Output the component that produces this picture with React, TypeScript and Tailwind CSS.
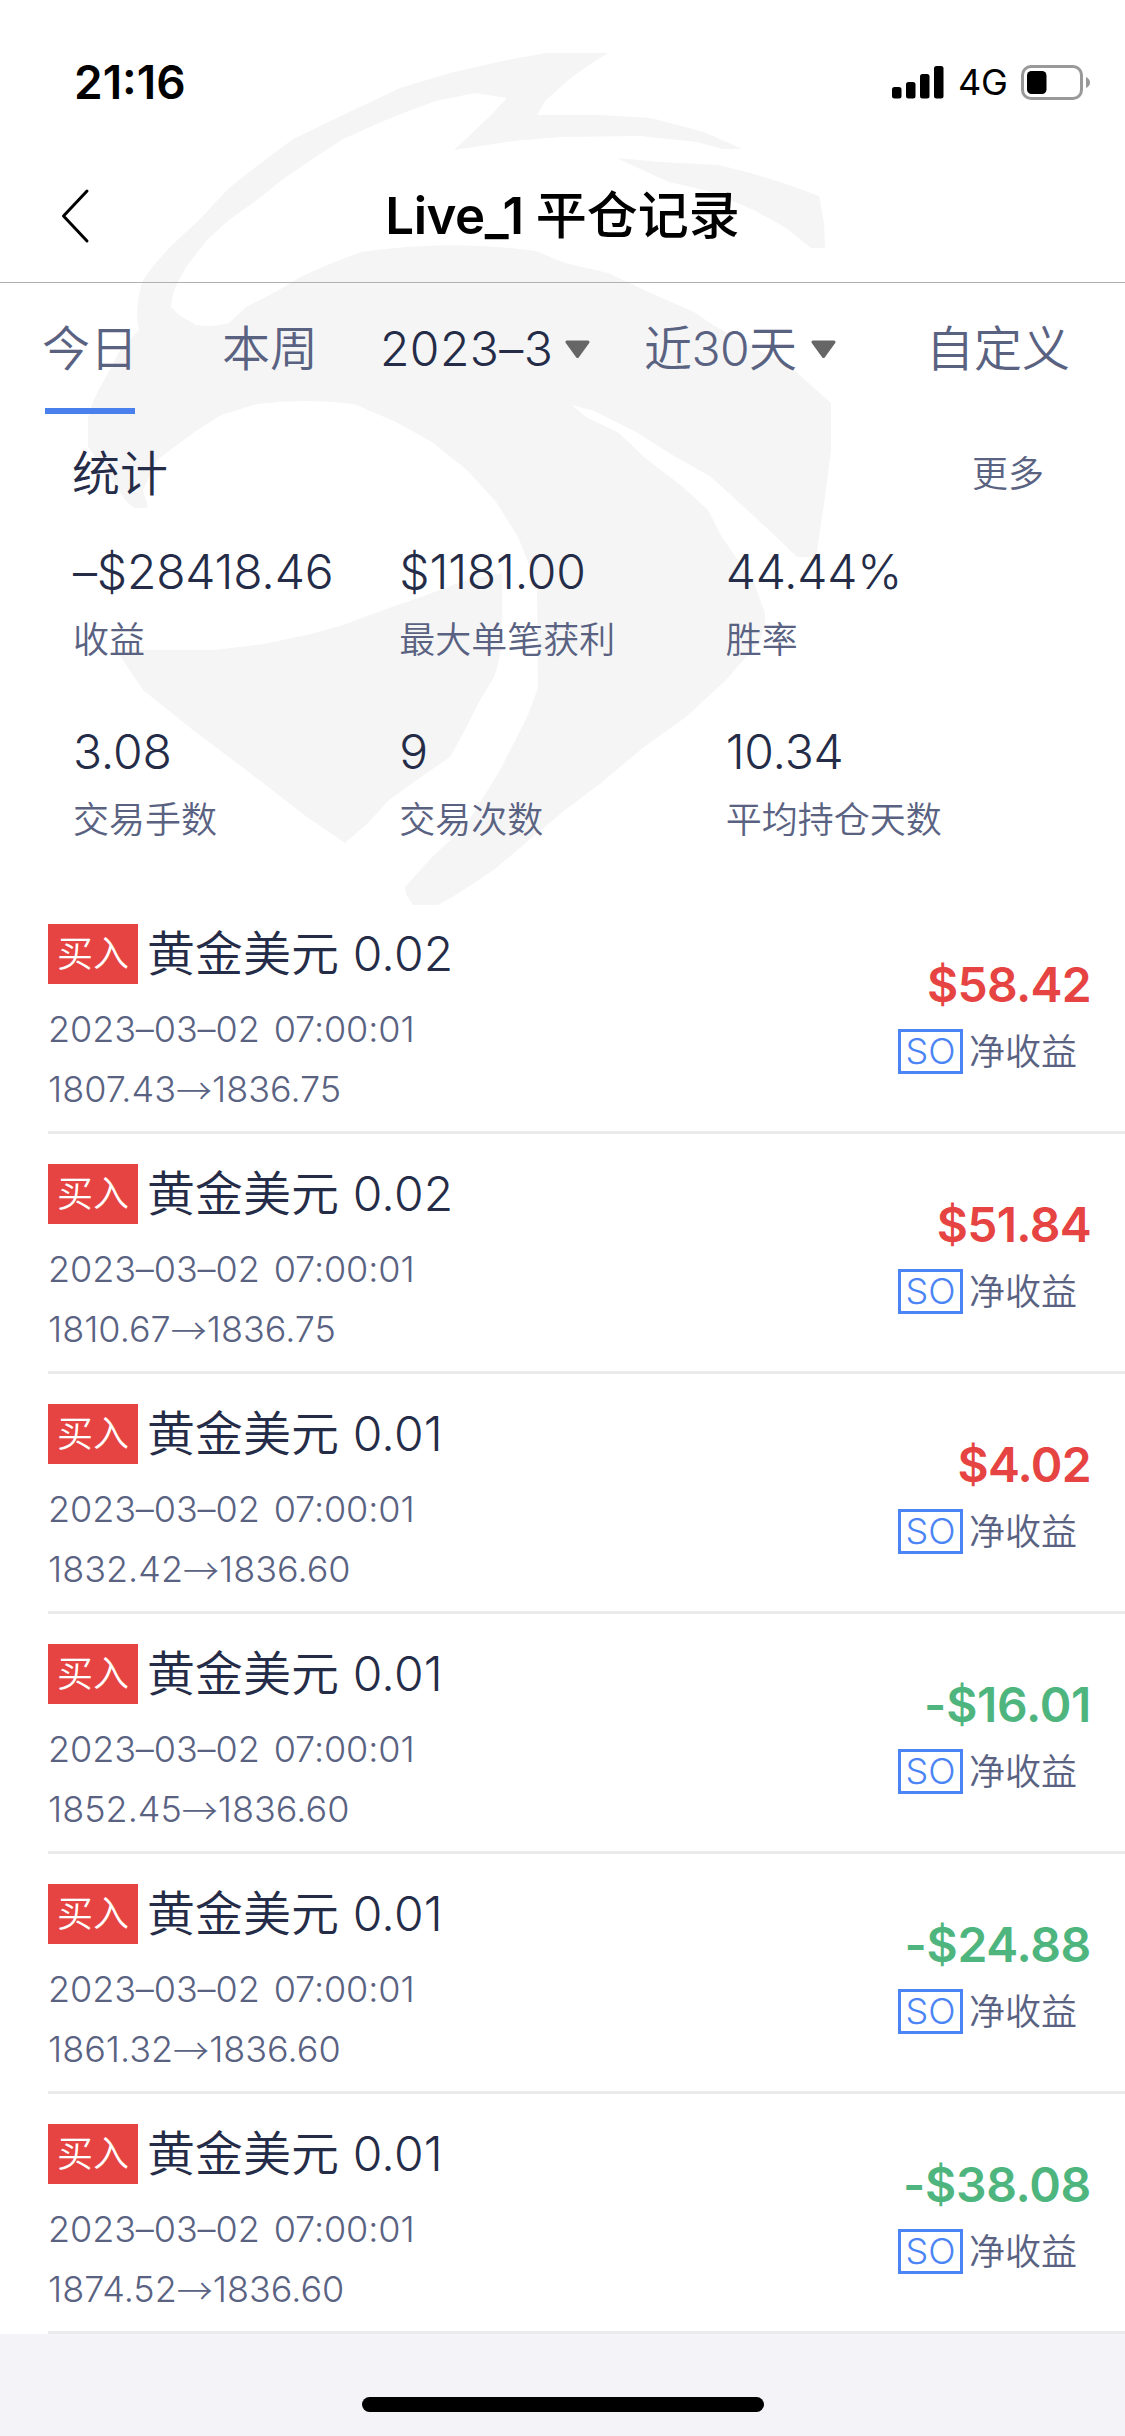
const FONT = "font-['Inter','Noto_Sans_CJK_SC',sans-serif]";

function Watermark() {
  return (
    <svg className="pointer-events-none absolute left-0 top-0" width="1125" height="940" viewBox="0 0 1125 940" fill="#f5f5f5" aria-hidden="true">
      <path d="M608 53 L546 53 L507 60 L450 73 L400 88 L343 115 L293 139 L257 166 L229 188 L200 219 L171 246 L154 265 L143 280 Q137 295 137 320 L139 330 L120 350 L107 375 Q97 392 93 402 L88 418 L88 447 L112 480 L125 500 L134 508 L148 508 L143 490 L157 460 L193 433 L221 415 L257 404 Q305 398 354 404 L396 422 L432 442 L468 471 L496 502 L518 537 Q530 565 537 590 L538 687 Q534 700 527 717 L514 743 L500 770 L486 793 L471 817 L454 837 L432 857 L405 887 L406 894 L413 905 L438 905 L459 893 L495 869 L565 810 L601 783 L644 747 L686 717 L726 680 L758 643 Q766 630 765 613 L754 583 L733 553 L722 537 L708 510 L683 487 L644 457 L619 433 L586 417 L572 405 L594 411 L636 432 L669 453 L711 477 L733 497 L769 530 L797 557 L816 557 L819 537 L826 490 L831 450 L831 403 L794 370 L713 325 L694 312 L644 290 L608 273 L565 263 L536 251 Q450 239 361 252 L332 263 L300 277 L279 290 L246 307 L229 323 Q213 328 196 325 L179 315 L171 307 Q172 295 175 288 L186 267 L207 240 L229 220 L257 200 L282 180 L311 160 L343 139 L379 123 L411 110 L436 101 L475 93 L507 98 L489 117 L468 137 L454 150 L514 141 L560 137 L640 136 L697 142 L722 149 L742 149 L704 132 L651 118 L600 115 L537 115 L546 100 L572 77 L592 63 Z" />
      <path d="M617 158 L640 169 L669 182 L708 191 L754 210 L786 228 L811 248 L825 248 L824 223 L819 196 L786 184 L754 174 L719 165 L660 162 Z" />
      <path d="M116 650 L214 650 L264 644 L311 634 L343 625 L389 608 L421 597 L461 582 L502 573 L502 640 Q499 665 494 677 L479 702 L464 732 L450 757 L421 777 L389 800 L368 823 L345 843 L307 817 L250 773 L193 730 L143 690 Z" />
    </svg>
  );
}

function StatusBar() {
  return (
    <div className="flex h-[150px] items-start justify-between pl-[74px] pr-[34px] pt-[56px] text-black">
      <span className="text-[46px] font-semibold leading-[52px]">21:16</span>
      <div className="flex h-[52px] items-center">
        <svg width="52" height="34" viewBox="0 0 52 34">
          <rect x="0" y="22" width="9.500" height="11.500" rx="2.500" />
          <rect x="14" y="17" width="9.500" height="16.500" rx="2.500" />
          <rect x="28" y="9" width="9.500" height="24.500" rx="2.500" />
          <rect x="42" y="1" width="9.500" height="32.500" rx="2.500" />
        </svg>
        <span className="ml-[14px] w-[63px] text-[36px] font-normal leading-[52px] tracking-[-0.3px]">4G</span>
        <svg width="70" height="35" viewBox="0 0 70 35">
          <rect x="1.500" y="1.500" width="59" height="32" rx="8.500" fill="none" stroke="#999" strokeWidth="3" />
          <rect x="6" y="6" width="19.500" height="23" rx="4.500" />
          <path d="M65 12 Q69 14 69 17.500 Q69 21 65 23 Z" fill="#999" />
        </svg>
      </div>
    </div>
  );
}

function Header() {
  return (
    <header className="grid h-[133px] grid-cols-[1fr_auto_1fr] items-center border-b border-[#b0b0b0] text-black">
      <svg className="ml-[60px]" width="30" height="56" viewBox="0 0 30 56" fill="none" stroke="#000" strokeWidth="3" strokeLinecap="round" strokeLinejoin="round">
        <path d="M27 3 L3.500 28 L27 53" />
      </svg>
      <h1 className="text-[51px] font-semibold leading-[60px]">
        <span className="mr-[12px] tracking-[-0.5px]">Live_1</span>
        <span className="font-medium">平仓记录</span>
      </h1>
      <span />
    </header>
  );
}

function Caret() {
  return (
    <svg width="25" height="19" viewBox="0 0 25 19" fill="#666" stroke="#666" strokeWidth="3" strokeLinejoin="round">
      <path d="M2 2 H23 L12.500 16.500 Z" />
    </svg>
  );
}

function Tabs() {
  return (
    <nav className="flex h-[131px] pt-[36px] text-[48px] leading-[60px] text-[#5a6282]">
      <div className="ml-[42px] flex h-[95px] w-[93px] flex-col">
        <span className="h-[89px] whitespace-nowrap pb-[29px]">今日</span>
        <span className="ml-[3px] h-[6px] w-[90px] bg-[#4a80ee]" />
      </div>
      <span className="ml-[87px] w-[158px] whitespace-nowrap">本周</span>
      <div className="flex h-[60px] w-[264px] items-center text-[#252c48]">
        <span className="w-[185px] tracking-[0.4px]">2023–3</span>
        <Caret />
      </div>
      <div className="flex h-[60px] w-[282px] items-center">
        <span className="w-[167px] whitespace-nowrap tracking-[-0.6px]">近30天</span>
        <Caret />
      </div>
      <span className="whitespace-nowrap">自定义</span>
    </nav>
  );
}

const stats = [
  ["–$28418.46", "收益"],
  ["$1181.00", "最大单笔获利"],
  ["44.44%", "胜率"],
  ["3.08", "交易手数"],
  ["9", "交易次数"],
  ["10.34", "平均持仓天数"],
];

function Stats() {
  return (
    <section className="h-[480px] px-[73px] pt-[30px]">
      <div className="flex h-[60px] items-center justify-between pr-[8px]">
        <h2 className="-ml-px text-[48px] font-[350] leading-[60px] text-[#252c48]">统计</h2>
        <span className="text-[36px] leading-[60px] text-[#5a6282]">更多</span>
      </div>
      <div className="mt-[38px] grid grid-cols-3">
        {stats.map(([value, label]) => (
          <div key={label} className="h-[180px]">
            <div className="h-[60px] whitespace-nowrap text-[48px] leading-[60px] tracking-[-0.2px] text-[#252c48]">{value}</div>
            <div className="mt-[14px] whitespace-nowrap text-[36px] leading-[48px] text-[#5a6282]">{label}</div>
          </div>
        ))}
      </div>
    </section>
  );
}

const trades = [
  { lots: "0.02", open: "1807.43", close: "1836.75", profit: "$58.42" },
  { lots: "0.02", open: "1810.67", close: "1836.75", profit: "$51.84" },
  { lots: "0.01", open: "1832.42", close: "1836.60", profit: "$4.02" },
  { lots: "0.01", open: "1852.45", close: "1836.60", profit: "-$16.01" },
  { lots: "0.01", open: "1861.32", close: "1836.60", profit: "-$24.88" },
  { lots: "0.01", open: "1874.52", close: "1836.60", profit: "-$38.08" },
];

function TradeRow({ trade }: { trade: (typeof trades)[number] }) {
  const tone = trade.profit.startsWith("-")
    ? "text-[#4fb57e] tracking-[-0.3px]"
    : "text-[#e64442] tracking-[-0.7px]";
  return (
    <li className="ml-[48px] flex h-[240px] justify-between border-b-[3px] border-[#ebebeb] pr-[34px] pt-[30px]">
      <div className="text-[36px] text-[#5a6282]">
        <div className="flex h-[60px] items-center">
          <span className="h-[60px] w-[90px] bg-[#e64442] text-center leading-[60px] text-white">买入</span>
          <span className="ml-[9px] whitespace-pre text-[48px] leading-[60px] text-[#252c48]">
            黄金美元<span className="tracking-[0.2px]"> {trade.lots}</span>
          </span>
        </div>
        <div className="mt-[15px] h-[60px] leading-[60px] tracking-[-0.1px] [word-spacing:4px]">2023–03–02 07:00:01</div>
        <div className="flex h-[60px] leading-[60px]">
          <span>{trade.open}</span>
          <span className="font-['Noto_Sans_CJK_SC'] font-light">→</span>
          <span>{trade.close}</span>
        </div>
      </div>
      <div className="flex flex-col items-end pt-[30px]">
        <div className={`mt-px h-[59px] text-[48px] font-semibold leading-[60px] ${tone}`}>{trade.profit}</div>
        <div className="mr-[14px] mt-[15px] flex h-[45px] items-center text-[36px] text-[#5a6282]">
          <span className="mr-[6px] flex h-[45px] w-[65px] items-center justify-center border-[3px] border-[#4a84f5] leading-[39px] text-[#4a84f5]">SO</span>
          净收益
        </div>
      </div>
    </li>
  );
}

export default function App() {
  return (
    <div className={`relative h-[2436px] w-[1125px] overflow-hidden bg-white font-[350] ${FONT}`} lang="zh-CN">
      <Watermark />
      <div className="relative flex h-full flex-col">
        <StatusBar />
        <Header />
        <Tabs />
        <Stats />
        <ul>
          {trades.map((trade) => (
            <TradeRow key={trade.open} trade={trade} />
          ))}
        </ul>
        <footer className="flex flex-1 items-end justify-center bg-[#f3f3f8] pb-[24px]">
          <div className="h-[15px] w-[402px] rounded-full bg-black" />
        </footer>
      </div>
    </div>
  );
}
